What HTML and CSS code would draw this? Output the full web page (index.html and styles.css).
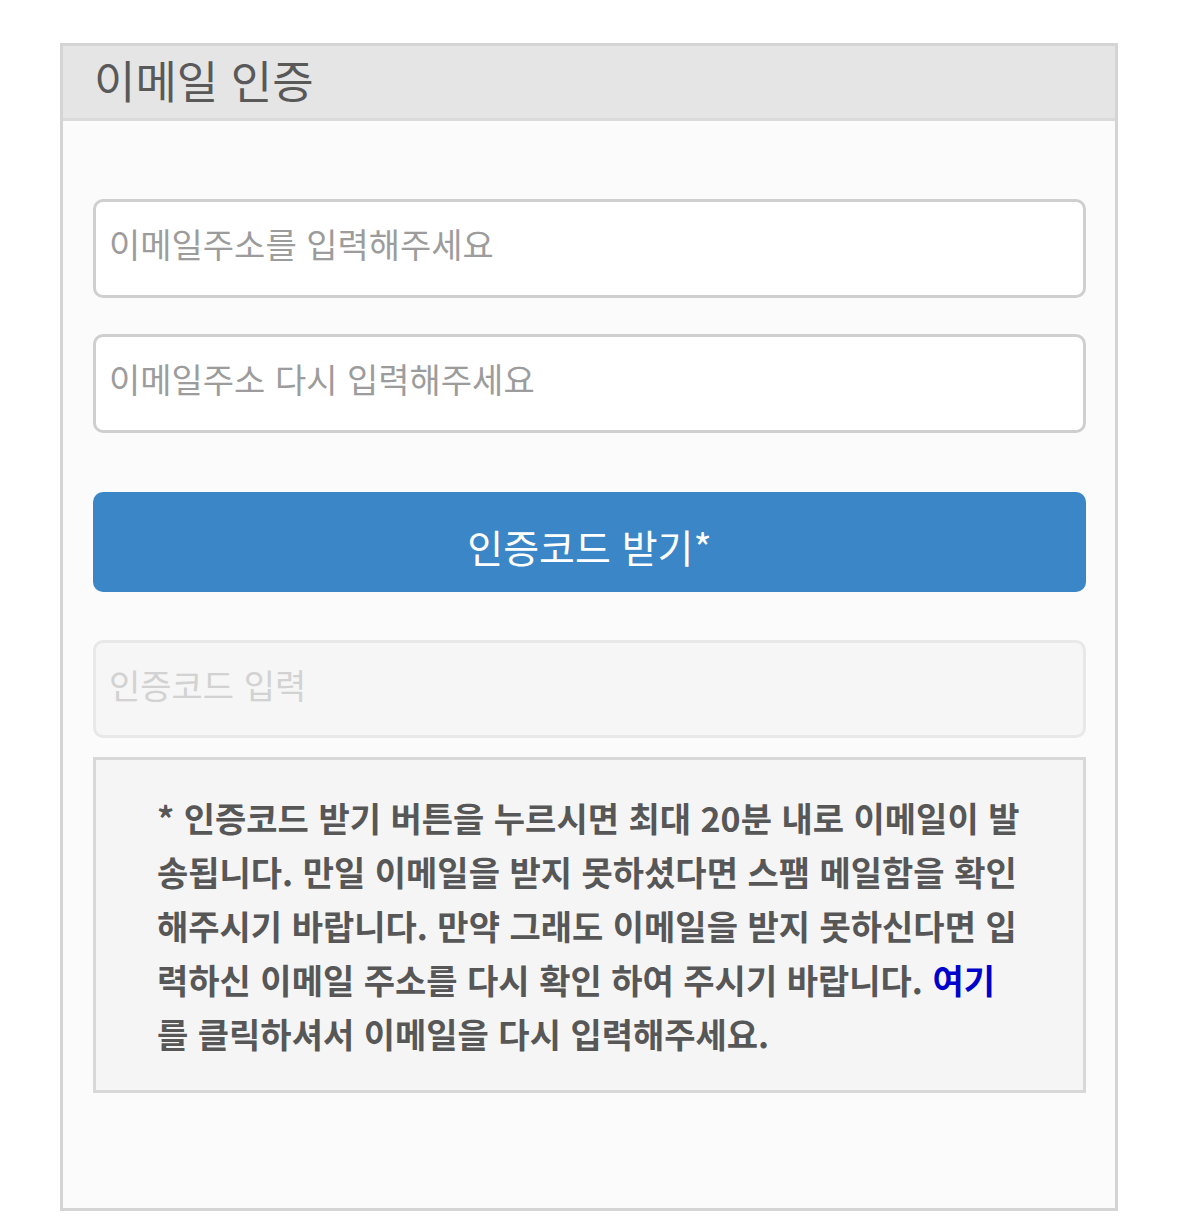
FILE: index.html
```html
<!DOCTYPE html>
<html lang="ko">
  <head>
    <meta charset="UTF-8" />
    <meta name="viewport" content="width=device-width, initial-scale=1.0" />
    <title>이메일 인증</title>
    <link rel="stylesheet" href="styles.css">
  </head>

  <body>
    <div class="panel">
      <div class="panel-head">
        <h2>이메일 인증</h2>
      </div>

      <div class="panel-body">
        <form class="verify-form">
          <input type="email" class="field" placeholder="이메일주소를 입력해주세요" />
          <input type="email" class="field" placeholder="이메일주소 다시 입력해주세요" />
          <button type="button" class="btn-code">인증코드 받기*</button>
          <input type="text" class="field" placeholder="인증코드 입력" disabled />
        </form>

        <div class="notice">
          <p>* 인증코드 받기 버튼을 누르시면 최대 20분 내로 이메일이 발송됩니다. 만일 이메일을 받지 못하셨다면 스팸 메일함을 확인해주시기 바랍니다. 만약 그래도 이메일을 받지 못하신다면 입력하신 이메일 주소를 다시 확인 하여 주시기 바랍니다. <a href="#">여기</a>를 클릭하셔서 이메일을 다시 입력해주세요.</p>
        </div>
      </div>
    </div>
  </body>
</html>
```

FILE: styles.css
```css
body {
  font-family: "Noto Sans CJK KR", "Noto Sans", sans-serif;
  margin: 0;
  padding: 0;
  background-color: #fff;
}

.panel {
  width: 1058px;
  box-sizing: border-box;
  margin: 43px 0 0 60px;
  border: 3px solid #d4d4d4;
  background-color: #fbfbfb;
}

.panel-head {
  background-color: #e5e5e5;
  border-bottom: 3px solid #dadada;
  height: 75px;
  box-sizing: border-box;
  padding: 0 31px 5px;
  display: flex;
  align-items: center;
}

.panel-head h2 {
  margin: 0;
  font-size: 45px;
  font-weight: normal;
  color: #595959;
  line-height: 1;
}

.panel-body {
  padding: 78px 29px 115px 30px;
}

/* form */

.verify-form {
  display: flex;
  flex-direction: column;
}

.field {
  box-sizing: border-box;
  width: 100%;
  height: 99px;
  padding: 0 13px 10px;
  border: 3px solid #cfcfcf;
  border-radius: 10px;
  background-color: #fff;
  font-family: inherit;
  font-size: 34px;
  color: #333;
  margin-bottom: 36px;
}

.field::placeholder {
  color: #9c9c9c;
}

.field:disabled {
  background-color: #f6f6f6;
  border-color: #e8e8e8;
  height: 98px;
  margin-bottom: 19px;
}

.field:disabled::placeholder {
  color: #d2d2d2;
}

.btn-code {
  width: 100%;
  height: 100px;
  margin: 23px 0 48px;
  padding: 8px 0 0;
  border: none;
  border-radius: 10px;
  background-color: #3b86c6;
  color: #fff;
  font-family: inherit;
  font-size: 39px;
  cursor: pointer;
}

/* notice */

.notice {
  border: 3px solid #d8d8d8;
  background-color: #f5f5f5;
  padding: 31px 62px 29px 61px;
}

.notice p {
  margin: 0;
  font-size: 34px;
  font-weight: bold;
  line-height: 54px;
  color: #575757;
}

.notice a {
  color: #0000cc;
  text-decoration: none;
}
```
